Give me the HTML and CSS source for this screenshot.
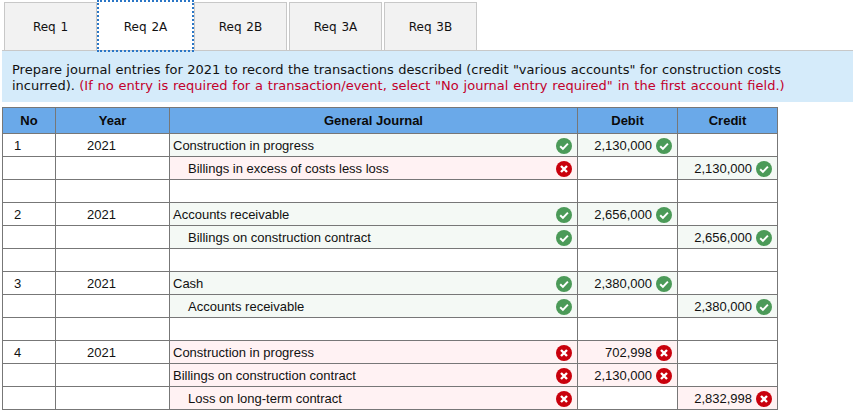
FILE: index.html
```html
<!DOCTYPE html>
<html>
<head>
<meta charset="utf-8">
<title>Journal entries</title>
<link rel="stylesheet" href="styles.css">
</head>

<body>
	<svg class="defs" width="0" height="0">
		<symbol id="ok" viewBox="0 0 16 16">
			<circle cx="8" cy="8" r="8" fill="#4b9a58"></circle>
			<path d="M4.2 8.3 L6.9 10.9 L11.9 5.6" fill="none" stroke="#fff" stroke-width="2"></path>
		</symbol>
		<symbol id="bad" viewBox="0 0 16 16">
			<circle cx="8" cy="8" r="8" fill="#c9000c"></circle>
			<path d="M5 5 L11 11 M11 5 L5 11" fill="none" stroke="#fff" stroke-width="2.4"></path>
		</symbol>
	</svg>

	<ul class="tabs">
		<li>Req 1</li>
		<li class="active">Req 2A</li>
		<li>Req 2B</li>
		<li>Req 3A</li>
		<li>Req 3B</li>
	</ul>

	<div class="prompt">
		Prepare journal entries for 2021 to record the transactions described (credit "various accounts" for construction costs incurred).
		<span class="note">(If no entry is required for a transaction/event, select "No journal entry required" in the first account field.)</span>
	</div>

	<table class="journal">
		<colgroup>
			<col class="c-no"><col class="c-year"><col class="c-acct"><col class="c-amt"><col class="c-amt">
		</colgroup>
		<thead>
			<tr><th>No</th><th>Year</th><th>General Journal</th><th>Debit</th><th>Credit</th></tr>
		</thead>
		<tbody>
			<tr>
				<td class="no">1</td><td class="year">2021</td>
				<td class="acct good"><div class="cell"><span>Construction in progress</span><svg class="icon"><use href="#ok"></use></svg></div></td>
				<td class="good"><div class="cell amt"><span>2,130,000</span><svg class="icon"><use href="#ok"></use></svg></div></td>
				<td></td>
			</tr>
			<tr>
				<td></td><td></td>
				<td class="acct wrong"><div class="cell indent"><span>Billings in excess of costs less loss</span><svg class="icon"><use href="#bad"></use></svg></div></td>
				<td></td>
				<td class="good"><div class="cell amt"><span>2,130,000</span><svg class="icon"><use href="#ok"></use></svg></div></td>
			</tr>
			<tr class="blank"><td></td><td></td><td></td><td></td><td></td></tr>

			<tr>
				<td class="no">2</td><td class="year">2021</td>
				<td class="acct good"><div class="cell"><span>Accounts receivable</span><svg class="icon"><use href="#ok"></use></svg></div></td>
				<td class="good"><div class="cell amt"><span>2,656,000</span><svg class="icon"><use href="#ok"></use></svg></div></td>
				<td></td>
			</tr>
			<tr>
				<td></td><td></td>
				<td class="acct good"><div class="cell indent"><span>Billings on construction contract</span><svg class="icon"><use href="#ok"></use></svg></div></td>
				<td></td>
				<td class="good"><div class="cell amt"><span>2,656,000</span><svg class="icon"><use href="#ok"></use></svg></div></td>
			</tr>
			<tr class="blank"><td></td><td></td><td></td><td></td><td></td></tr>

			<tr>
				<td class="no">3</td><td class="year">2021</td>
				<td class="acct good"><div class="cell"><span>Cash</span><svg class="icon"><use href="#ok"></use></svg></div></td>
				<td class="good"><div class="cell amt"><span>2,380,000</span><svg class="icon"><use href="#ok"></use></svg></div></td>
				<td></td>
			</tr>
			<tr>
				<td></td><td></td>
				<td class="acct good"><div class="cell indent"><span>Accounts receivable</span><svg class="icon"><use href="#ok"></use></svg></div></td>
				<td></td>
				<td class="good"><div class="cell amt"><span>2,380,000</span><svg class="icon"><use href="#ok"></use></svg></div></td>
			</tr>
			<tr class="blank"><td></td><td></td><td></td><td></td><td></td></tr>

			<tr>
				<td class="no">4</td><td class="year">2021</td>
				<td class="acct wrong"><div class="cell"><span>Construction in progress</span><svg class="icon"><use href="#bad"></use></svg></div></td>
				<td class="wrong"><div class="cell amt"><span>702,998</span><svg class="icon"><use href="#bad"></use></svg></div></td>
				<td></td>
			</tr>
			<tr>
				<td></td><td></td>
				<td class="acct wrong"><div class="cell"><span>Billings on construction contract</span><svg class="icon"><use href="#bad"></use></svg></div></td>
				<td class="wrong"><div class="cell amt"><span>2,130,000</span><svg class="icon"><use href="#bad"></use></svg></div></td>
				<td></td>
			</tr>
			<tr>
				<td></td><td></td>
				<td class="acct wrong"><div class="cell indent"><span>Loss on long-term contract</span><svg class="icon"><use href="#bad"></use></svg></div></td>
				<td></td>
				<td class="wrong"><div class="cell amt"><span>2,832,998</span><svg class="icon"><use href="#bad"></use></svg></div></td>
			</tr>
		</tbody>
	</table>
</body>
</html>
```

FILE: styles.css
```css
body {
	margin: 0;
	background: #fff;
	color: #111;
	font-family: "Liberation Sans", Arial, sans-serif;
	overflow: hidden;
}
.defs {
	display: block;
	height: 0;
}

/* tabs */
ul.tabs {
	list-style: none;
	margin: 0;
	padding: 2px 0 0 4px;
	display: flex;
	gap: 2px;
}
ul.tabs li {
	box-sizing: border-box;
	width: 93px;
	height: 48px;
	line-height: 48px;
	text-align: center;
	font-family: "DejaVu Sans", Verdana, sans-serif;
	font-size: 12px;
	word-spacing: 1px;
	background-color: #f2f2f2;
	border: 1px solid #c8c8c8;
	border-bottom: 0;
}
ul.tabs li.active {
	background-color: #fff;
	border-color: #fff;
	outline: 2px dotted #2a76c6;
	position: relative;
	z-index: 1;
}

/* instructions */
.prompt {
	box-sizing: border-box;
	margin-left: 2px;
	height: 52px;
	padding: 11px 40px 0 10px;
	background-color: #d5ebfa;
	border-top: 1px solid #c8c8c8;
	font-family: "DejaVu Sans", Verdana, sans-serif;
	font-size: 13px;
	line-height: 16px;
	word-spacing: 0.25px;
}
.prompt .note {
	color: #c3002b;
	word-spacing: 0.7px;
}

/* journal table */
table.journal {
	border-collapse: collapse;
	table-layout: fixed;
	width: 775px;
	margin: 5px 0 0 2px;
	font-size: 13px;
}
.c-no { width: 53px; }
.c-year { width: 114px; }
.c-acct { width: 408px; }
.c-amt { width: 100px; }

table.journal th,
table.journal td {
	border: 1px solid #777;
	padding: 0;
	height: 22px;
	line-height: 22px;
}
table.journal th {
	height: 25px;
	background-color: #6aa9e9;
	font-size: 13px;
	color: #0a0a0a;
}
table.journal td.no {
	padding: 2px 0 0 11px;
	height: 20px;
	line-height: 20px;
}
table.journal td.year {
	padding: 2px 0 0 31px;
	height: 20px;
	line-height: 20px;
}
td.good {
	background-color: #f4f9f5;
}
td.wrong {
	background-color: #fff2f3;
}

.cell {
	display: flex;
	align-items: center;
	justify-content: space-between;
	height: 22px;
	padding: 1px 5px 0 3px;
	box-sizing: border-box;
}
.cell.indent {
	padding-left: 18px;
}
.cell.amt {
	justify-content: flex-end;
	gap: 4px;
	padding-right: 5px;
}
.icon {
	width: 16px;
	height: 16px;
	flex: none;
}
```
